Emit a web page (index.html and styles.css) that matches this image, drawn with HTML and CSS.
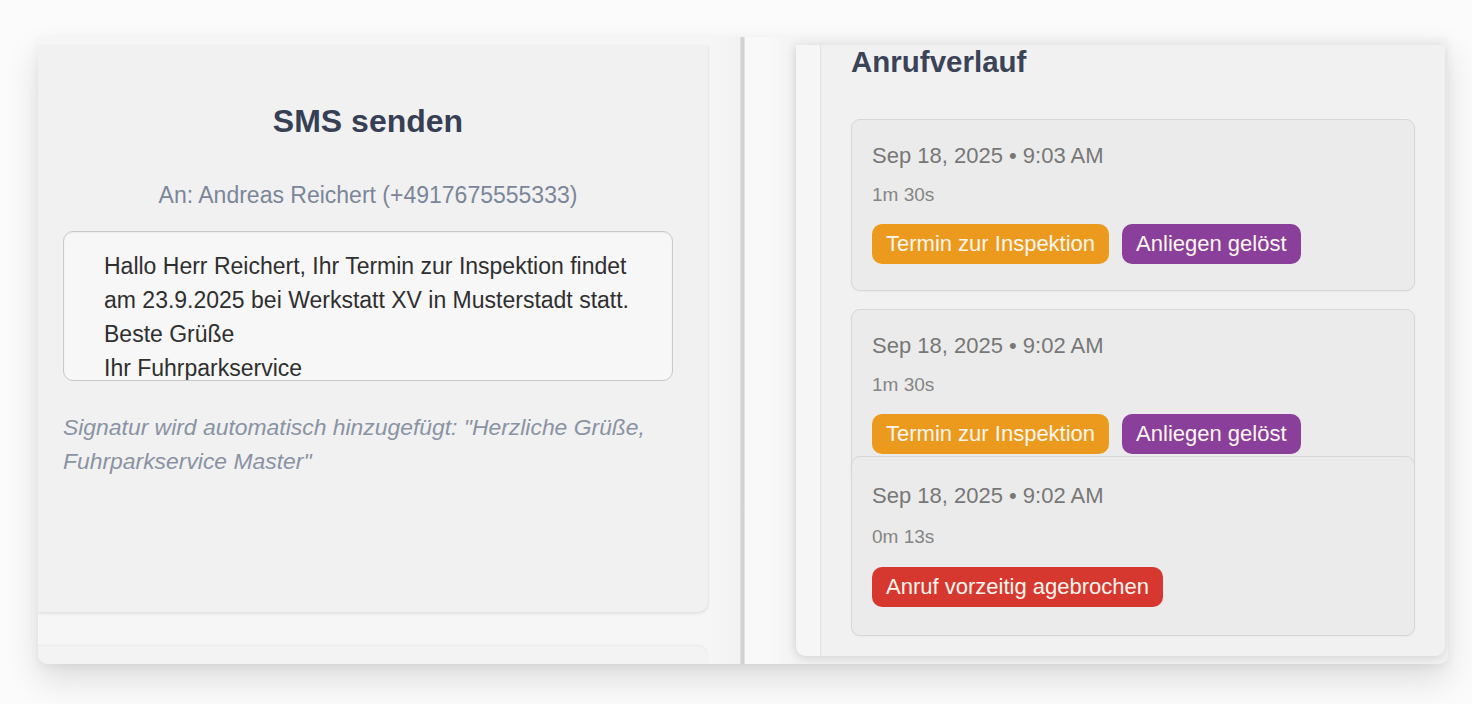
FILE: index.html
```html
<!DOCTYPE html>
<html lang="de">
<head>
<meta charset="utf-8">
<title>SMS senden – Anrufverlauf</title>
<link rel="stylesheet" href="styles.css">
</head>
<body>
<div class="frame">
  <div class="left-col">
    <section class="sms-card">
      <h2 class="sms-title">SMS senden</h2>
      <p class="recipient">An: Andreas Reichert (+4917675555333)</p>
      <div class="message-box">
        <p class="message">Hallo Herr Reichert, Ihr Termin zur Inspektion findet am 23.9.2025 bei Werkstatt XV in Musterstadt statt.<br>Beste Grüße<br>Ihr Fuhrparkservice</p>
      </div>
      <p class="signature">Signatur wird automatisch hinzugefügt: "Herzliche Grüße, Fuhrparkservice Master"</p>
    </section>
    <section class="next-card"></section>
  </div>
  <div class="divider"></div>
  <div class="right-col">
    <section class="history-card">
      <div class="rail"></div>
      <div class="history">
        <h2 class="history-title">Anrufverlauf</h2>
        <div class="call">
          <div class="call-date">Sep 18, 2025 • 9:03 AM</div>
          <div class="call-duration">1m 30s</div>
          <div class="tags">
            <span class="tag tag-orange">Termin zur Inspektion</span>
            <span class="tag tag-purple">Anliegen gelöst</span>
          </div>
        </div>
        <div class="call">
          <div class="call-date">Sep 18, 2025 • 9:02 AM</div>
          <div class="call-duration">1m 30s</div>
          <div class="tags">
            <span class="tag tag-orange">Termin zur Inspektion</span>
            <span class="tag tag-purple">Anliegen gelöst</span>
          </div>
        </div>
        <div class="call call-overlap">
          <div class="call-date">Sep 18, 2025 • 9:02 AM</div>
          <div class="call-duration">0m 13s</div>
          <div class="tags">
            <span class="tag tag-red">Anruf vorzeitig agebrochen</span>
          </div>
        </div>
      </div>
    </section>
  </div>
</div>
</body>
</html>
```
FILE: styles.css
```css
* { box-sizing: border-box; }

html, body {
  margin: 0;
  padding: 0;
}

body {
  width: 1472px;
  height: 704px;
  overflow: hidden;
  background: #fbfbfb;
  font-family: "Liberation Sans", Arial, sans-serif;
}

.frame {
  margin: 37px 0 0 38px;
  width: 1410px;
  height: 627px;
  display: flex;
  overflow: hidden;
  background: #f7f7f7;
  border-radius: 0 0 10px 10px;
  box-shadow: 0 16px 34px rgba(0, 0, 0, 0.12), 0 4px 10px rgba(0, 0, 0, 0.05);
}

/* ---------- left column ---------- */
.left-col {
  width: 702px;
  padding-top: 8px;
  display: flex;
  flex-direction: column;
  gap: 34px;
  background: linear-gradient(to right, #f6f6f6 0, #f6f6f6 670px, #f2f2f2 702px);
}

.sms-card {
  width: 670px;
  height: 567px;
  flex: none;
  background: #f1f1f1;
  border-radius: 0 0 10px 0;
  box-shadow: 0 2px 3px rgba(0, 0, 0, 0.08), 1px 0 2px rgba(0, 0, 0, 0.04);
  padding: 56px 35px 0 25px;
  display: flex;
  flex-direction: column;
}

.sms-title {
  margin: 0;
  font-size: 32px;
  line-height: 40px;
  font-weight: 700;
  color: #363f54;
  text-align: center;
}

.recipient {
  margin: 40px 0 0;
  font-size: 23px;
  line-height: 28px;
  color: #7b8699;
  text-align: center;
}

.message-box {
  margin-top: 22px;
  height: 150px;
  overflow: hidden;
  border: 1.5px solid #c9c9c9;
  border-radius: 10px;
  background: #f7f7f7;
  padding: 17px 25px 0 40px;
  box-shadow: inset 0 1px 2px rgba(0, 0, 0, 0.05);
}

.message {
  margin: 0;
  font-size: 23px;
  line-height: 34px;
  color: #2f2f2f;
}

.signature {
  margin: 29px 0 0;
  font-size: 22.9px;
  line-height: 34px;
  font-style: italic;
  color: #8a93a3;
}

.next-card {
  width: 670px;
  flex: 1;
  background: #f3f3f3;
  border-radius: 0 10px 0 0;
  box-shadow: 0 -1px 2px rgba(0, 0, 0, 0.06);
}

/* ---------- divider ---------- */
.divider {
  width: 5px;
  flex: none;
  background: #d2d2d2;
  border-left: 1px solid #e0e0e0;
  border-right: 1px solid #e4e4e4;
}

/* ---------- right column ---------- */
.right-col {
  flex: 1;
  padding: 8px 3px 8px 51px;
  background: linear-gradient(to right, #f9f9f9 0, #f9f9f9 20px, #f3f3f3 51px);
}

.history-card {
  height: 611px;
  display: flex;
  background: #f2f2f2;
  border-radius: 0 0 10px 10px;
  box-shadow: 0 3px 12px rgba(0, 0, 0, 0.10), -2px 0 10px rgba(0, 0, 0, 0.05);
  overflow: hidden;
}

.rail {
  width: 24px;
  flex: none;
  background: #f6f6f6;
}

.history {
  flex: 1;
  border-left: 1.5px solid #e1e1e1;
  padding: 0 30px;
  background: #f1f1f1;
}

.history-title {
  margin: 0 0 41px;
  padding-top: 1px;
  font-size: 29.5px;
  line-height: 32px;
  font-weight: 700;
  color: #3a4357;
}

.call {
  position: relative;
  background: #ebebeb;
  border: 1.5px solid #d7d7d7;
  border-radius: 9px;
  padding: 22px 20px 26px;
  margin-bottom: 18px;
  box-shadow: 0 1px 2px rgba(0, 0, 0, 0.04);
}

.call-overlap {
  margin-top: -43px;
  padding-top: 25px;
  padding-bottom: 28px;
}

.call-date {
  font-size: 22px;
  line-height: 28px;
  color: #777;
}

.call-duration {
  margin-top: 14px;
  font-size: 19px;
  line-height: 22px;
  color: #858585;
}

.call-overlap .call-duration {
  margin-top: 16px;
}

.tags {
  margin-top: 18px;
  display: flex;
  gap: 13px;
}

.call-overlap .tags {
  margin-top: 19px;
}

.tag {
  display: inline-block;
  height: 40px;
  line-height: 40px;
  padding: 0 14px;
  border-radius: 10px;
  font-size: 22px;
  color: #fdf6ee;
  white-space: nowrap;
}

.tag-orange { background: #eb9a1d; }
.tag-purple { background: #8a3f9a; }
.tag-red { background: #d6382f; }
```
